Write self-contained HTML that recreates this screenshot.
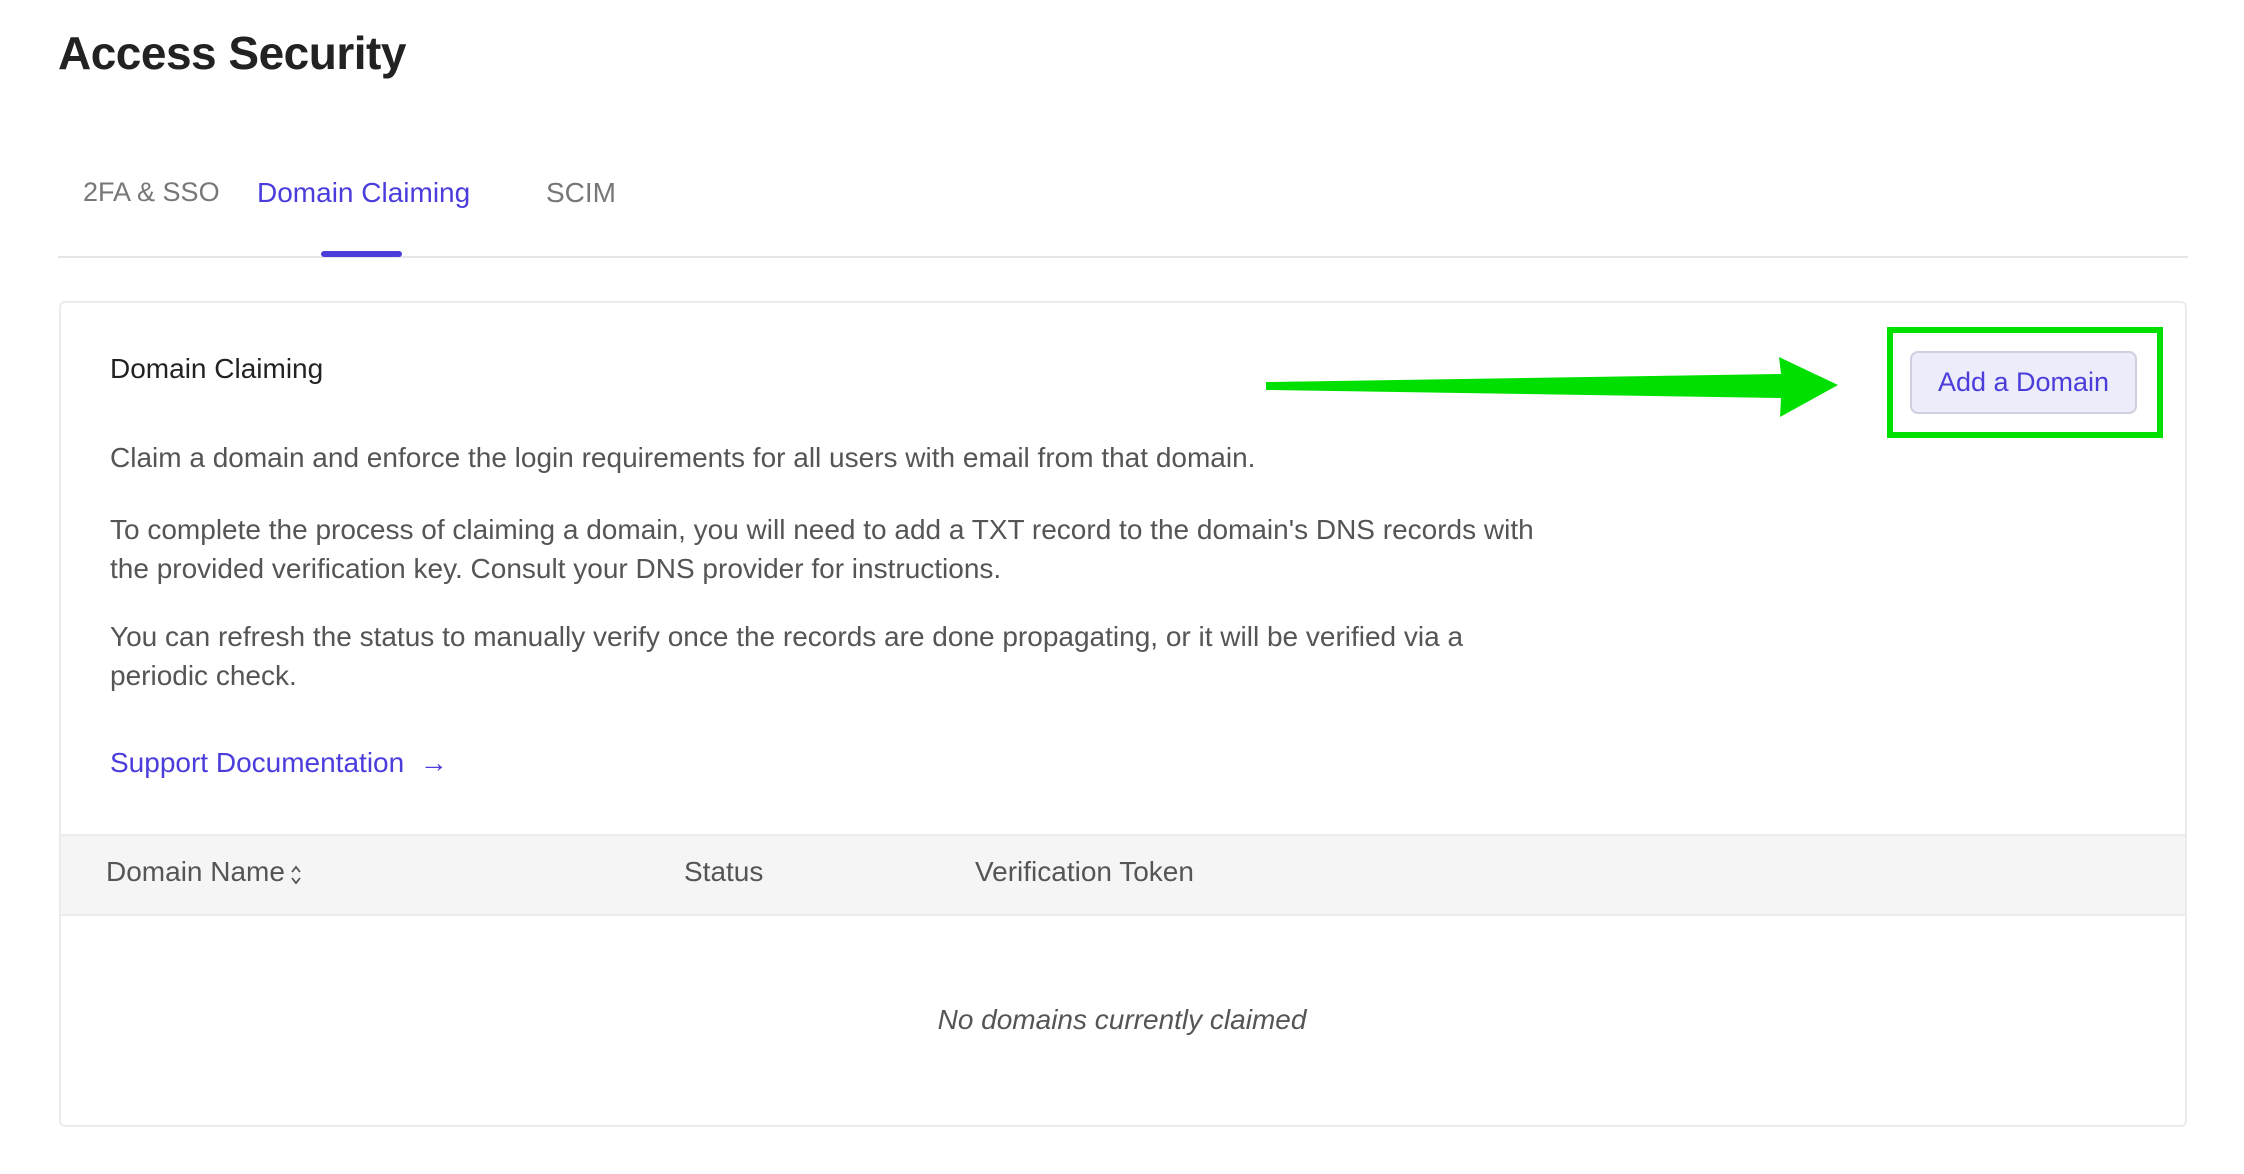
<!DOCTYPE html>
<html><head><meta charset="utf-8"><style>
*{margin:0;padding:0;box-sizing:border-box}
body{width:2244px;height:1174px;background:#fff;font-family:"Liberation Sans",sans-serif;position:relative;overflow:hidden;color:#555}
.a{position:absolute;white-space:nowrap}
h1{position:absolute;left:58px;top:26px;font-size:46px;font-weight:bold;color:#222;letter-spacing:-0.5px}
.tab{font-size:28px;top:177px;color:#777}
.p{font-size:28px;color:#555;left:110px}
.th{font-size:28px;color:#555;top:856px}
</style></head><body>
<h1>Access Security</h1>
<div class="a tab" style="left:83px;font-size:27px">2FA &amp; SSO</div>
<div class="a tab" style="left:257px;color:#4a3ddb">Domain Claiming</div>
<div class="a tab" style="left:546px">SCIM</div>
<div class="a" style="left:58px;top:256px;width:2130px;height:2px;background:#e6e6e6"></div>
<div class="a" style="left:321px;top:251px;width:81px;height:6px;border-radius:3px;background:#4a3ddb"></div>
<div class="a" style="left:59px;top:301px;width:2128px;height:826px;border:2px solid #ebebeb;border-radius:6px"></div>
<div class="a" style="left:110px;top:353px;font-size:28px;color:#222">Domain Claiming</div>
<div class="a p" style="top:442px">Claim a domain and enforce the login requirements for all users with email from that domain.</div>
<div class="a p" style="top:510px;line-height:39px">To complete the process of claiming a domain, you will need to add a TXT record to the domain's DNS records with<br>the provided verification key. Consult your DNS provider for instructions.</div>
<div class="a p" style="top:617px;line-height:39px">You can refresh the status to manually verify once the records are done propagating, or it will be verified via a<br>periodic check.</div>
<div class="a p" style="top:747px;color:#4a3ddb">Support Documentation &nbsp;→</div>
<div class="a" style="left:61px;top:834px;width:2124px;height:82px;background:#f5f5f5;border-top:2px solid #ebebeb;border-bottom:2px solid #ebebeb"></div>
<div class="a th" style="left:106px">Domain Name</div>
<svg class="a" style="left:290px;top:864px" width="12" height="22"><path d="M2 8 L6 3 L10 8 M2 14 L6 19 L10 14" fill="none" stroke="#555" stroke-width="1.8"/></svg>
<div class="a th" style="left:684px">Status</div>
<div class="a th" style="left:975px">Verification Token</div>
<div class="a" style="left:0;width:2244px;text-align:center;top:1004px;font-size:28px;font-style:italic;color:#555">No domains currently claimed</div>
<div class="a" style="left:1887px;top:327px;width:276px;height:111px;border:6px solid #00e000"></div>
<div class="a" style="left:1910px;top:351px;width:227px;height:63px;border:2px solid #cfcfe0;border-radius:8px;background:#ececfa;color:#4a3ddb;font-size:27px;text-align:center;line-height:59px">Add a Domain</div>
<svg class="a" style="left:0;top:0" width="2244" height="1174"><polygon points="1266,382 1781,374 1779,357 1838,385 1780,417 1781,398 1266,390" fill="#00e000"/></svg>
</body></html>
